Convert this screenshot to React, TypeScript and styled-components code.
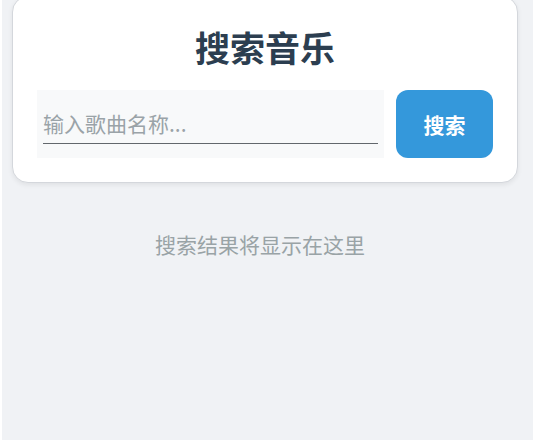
import React, { useState } from 'react'
import styled, { createGlobalStyle } from 'styled-components';

const GlobalStyle = createGlobalStyle`
  html, body {
    margin: 0;
    padding: 0;
    background: #ffffff;
    overflow: hidden;
  }
  body {
    font-family: "Noto Sans CJK SC", "Noto Sans", sans-serif;
  }
`;

const Page = styled.div`
  margin-left: 2px;
  height: 440px;
  background-color: #f0f2f5;
  padding: 0 15px 0 0;
  box-sizing: border-box;
  overflow: hidden;
`;

const Card = styled.section`
  margin: -4px 0 0 10px;
  background: #ffffff;
  border: 1px solid #d4d7dc;
  border-radius: 16px;
  box-shadow: 0 2px 5px rgba(0, 0, 0, 0.07);
  padding: 29px 24px 24px;
`;

const Title = styled.h1`
  margin: 0 0 22px;
  text-align: center;
  font-size: 35px;
  line-height: 42px;
  font-weight: 700;
  color: #2c3e50;
`;

const SearchRow = styled.div`
  display: flex;
  gap: 12px;
  align-items: stretch;
`;

const Field = styled.div`
  flex: 1;
  background: #f8f9fa;
  padding: 13px 6px 14px;
  display: flex;
  align-items: flex-end;
`;

const Input = styled.input`
  width: 100%;
  height: 40px;
  border: none;
  border-bottom: 1.5px solid #62676c;
  background: transparent;
  outline: none;
  padding: 0;
  font-family: inherit;
  font-size: 21px;
  color: #2c3e50;

  &::placeholder {
    color: #9aa3a8;
  }
`;

const SearchButton = styled.button`
  width: 97px;
  border: none;
  border-radius: 12px;
  background: #3498db;
  color: #ffffff;
  font-family: inherit;
  font-size: 21px;
  font-weight: 700;
  cursor: pointer;
`;

const Results = styled.div`
  padding-top: 46px;
  text-align: center;
  font-size: 21px;
  line-height: 30px;
  color: #99a3a6;
`;

const App = () => {
  const [query, setQuery] = useState('');

  return (
    <>
      <GlobalStyle />
      <Page>
        <Card>
          <Title>搜索音乐</Title>
          <SearchRow>
            <Field>
              <Input
                value={query}
                placeholder="输入歌曲名称..."
                onChange={(e) => setQuery(e.target.value)}
              />
            </Field>
            <SearchButton>搜索</SearchButton>
          </SearchRow>
        </Card>
        <Results>搜索结果将显示在这里</Results>
      </Page>
    </>
  )
}

export default App;
